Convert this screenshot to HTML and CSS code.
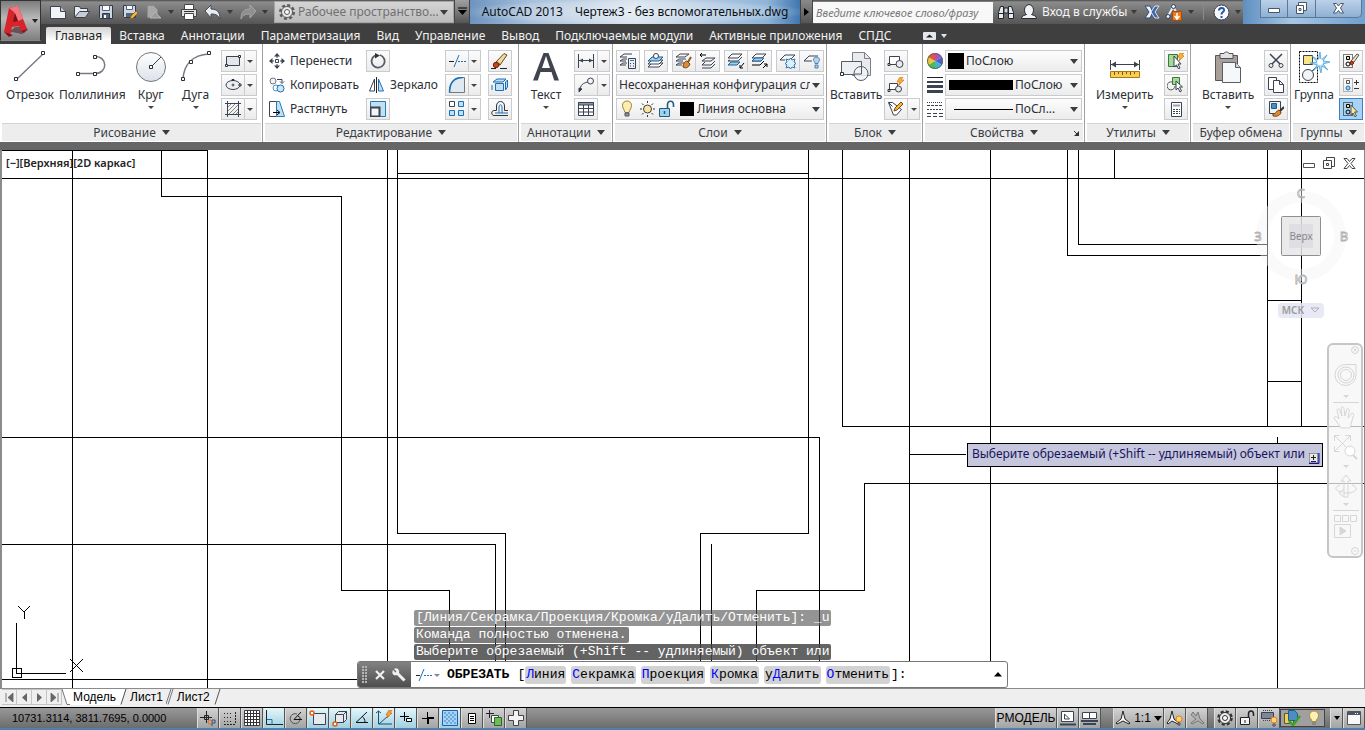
FILE: index.html
```html
<!DOCTYPE html>
<html lang="ru">
<head>
<meta charset="utf-8">
<title>AutoCAD 2013 — Чертеж3</title>
<link rel="stylesheet" href="styles.css">
</head>
<body>
<div class="app">
<header class="top">
  <button class="app-menu" aria-label="Меню приложения">
    <svg width="25" height="32" viewBox="0 0 25 32"><path d="M2 30l6-3 10 2 6-4-3-4-10 1z" fill="#3b0a0e" opacity=".5"/><path d="M0 27L5 3l9-2 9 23-6 2-2-5-7 1-2 7z" fill="#d8232a"/><path d="M5 3l9-2 5 13-5 2-4-9z" fill="#f2777e"/><path d="M9 17l5-1-3-8z" fill="#7a1219"/><path d="M0 27l6 3 2-8-2 7zM17 26l3 2 3-4z" fill="#9c1119"/><path d="M0 27l6 2 3 1-4 2z" fill="#8c0f16"/></svg>
    <i class="tri dark"></i>
  </button>
  <div class="top-main">
    <div class="titlebar">
      <div class="qat">
        <button aria-label="Новый"><svg width="18" height="18" viewBox="0 0 18 18"><path d="M1.500 3.500h10l5 5v7h-15z" fill="#f1f3f6" stroke="#3c424c"/><path d="M11.500 3.500v5h5" fill="#c4cad4" stroke="#3c424c"/></svg></button>
        <button aria-label="Открыть"><svg width="18" height="18" viewBox="0 0 18 18"><path d="M1.500 14.500v-11h5l1 2h7v3" fill="#e9ecf0" stroke="#3c424c"/><path d="M1.500 14.500l5-6h10l-4 6z" fill="#c6cdd8" stroke="#3c424c"/></svg></button>
        <button aria-label="Сохранить"><svg width="18" height="18" viewBox="0 0 18 18"><path d="M2.500 2.500h13v13h-12l-1-1z" fill="#cdd6e2" stroke="#2f3a4a"/><path d="M5.500 2.500h7v5h-7z" fill="#fff" stroke="#53627a"/><path d="M5.500 10.500h7v5h-7z" fill="#566478" stroke="#2f3a4a"/><path d="M7 12h2v3H7z" fill="#fff"/></svg></button>
        <button aria-label="Сохранить как"><svg width="18" height="18" viewBox="0 0 18 18"><path d="M2.500 2.500h12v12h-11l-1-1z" fill="#cdd6e2" stroke="#2f3a4a"/><path d="M5.500 2.500h6v4h-6z" fill="#fff" stroke="#53627a"/><path d="M5 10h7v4H5z" fill="#566478"/><path d="M9 16l1-3 5-5 2 2-5 5z" fill="#f2b63c" stroke="#8a5a1c" stroke-width=".8"/></svg></button>
        <button aria-label="Экспорт"><svg width="18" height="18" viewBox="0 0 18 18"><path d="M2.500 2.500h6l4 4v8h-10z" fill="#a8a8a8" stroke="#8b8b8b"/><path d="M5 15l5-6 6 6z" fill="#9b9b9b" stroke="#b4b4b4"/></svg></button>
        <i class="tri dim"></i>
        <button aria-label="Печать"><svg width="18" height="18" viewBox="0 0 18 18"><path d="M4.500 1.500h9v5h-9z" fill="#fff" stroke="#444"/><path d="M1.500 6.500h15v7h-15z" fill="#dfe2e6" stroke="#444"/><path d="M4.500 10.500h9v6h-9z" fill="#fff" stroke="#444"/><path d="M4 8.500h10" stroke="#333"/></svg></button>
        <button aria-label="Отменить"><svg width="18" height="18" viewBox="0 0 18 18"><path d="M1 8l6-6v4c6 0 9 3 9 10-2-4-4-5-9-5v4z" fill="#e9edf2" stroke="#444b57"/></svg></button>
        <i class="tri dim"></i>
        <button aria-label="Вернуть"><svg width="18" height="18" viewBox="0 0 18 18"><path d="M17 8l-6-6v4c-6 0-9 3-9 10 2-4 4-5 9-5v4z" fill="#8f8f8f" stroke="#a5a5a5"/></svg></button>
        <i class="tri dim"></i>
      </div>
      <div class="workspace">
        <svg width="18" height="18" viewBox="0 0 18 18"><circle cx="9" cy="9" r="6.700" fill="none" stroke="#5a5a5a" stroke-width="2.600" stroke-dasharray="3 2.260"/><circle cx="9" cy="9" r="5.500" fill="#e8e8e8" stroke="#5a5a5a"/><circle cx="9" cy="9" r="2.500" fill="#f8f8f8" stroke="#5a5a5a"/></svg>
        <select aria-label="Рабочее пространство"><option>Рабочее пространство...</option></select><i class="tri"></i>
      </div>
      <button class="qat-more" aria-label="Настройка панели"><svg width="9" height="9" viewBox="0 0 9 9"><path d="M0 1h9" stroke="#000"/><path d="M0 3h9L4.500 8z"/></svg></button>
      <div class="doc-title"><span>AutoCAD 2013</span><span>Чертеж3 - без вспомогательных.dwg</span></div>
      <button class="search-toggle" aria-label="Свернуть поиск"><svg width="5" height="8" viewBox="0 0 5 8"><path d="M0 0l5 4-5 4z"/></svg></button>
      <input class="search" type="text" aria-label="Поиск" placeholder="Введите ключевое слово/фразу">
      <div class="services">
        <button aria-label="Найти"><svg width="18" height="18" viewBox="0 0 18 18"><path d="M1.500 15.500v-6l2-6h3v12zM16.500 15.500v-6l-2-6h-3v12z" fill="#e6e9ee" stroke="#20242b"/><path d="M7 5h4v5H7z" fill="#d0d4da" stroke="#20242b"/><path d="M2 10.500h5M11 10.500h5" stroke="#20242b"/></svg></button>
        <button class="signin"><svg width="18" height="18" viewBox="0 0 18 18"><path d="M1.500 15.500c0-3 3-3 5-4-3-2-3-9 2.500-10 5.500 1 5.500 8 2.500 10 2 1 5 1 5 4z" fill="#f0f2f5" stroke="#252930"/></svg>Вход в службы<i class="tri dim"></i></button>
        <button aria-label="Exchange"><svg width="16" height="14" viewBox="0 0 16 14"><path d="M1 1h5l3 6-3 6H1l4-6z" fill="#f0f4fa" stroke="#28487c"/><path d="M15 1h-4L7 7l4 6h4l-4-6z" fill="#3c67ad" stroke="#dce6f5"/></svg></button>
        <button aria-label="Обновления"><svg width="18" height="18" viewBox="0 0 18 18"><path d="M3 13L8 4M9 5l2 4" stroke="#e9edf3" stroke-width="2"/><circle cx="8.500" cy="3.500" r="2" fill="#eef2f8" stroke="#2b3f60"/><circle cx="3" cy="13.500" r="2" fill="#eef2f8" stroke="#2b3f60"/><path d="M7.500 8.500h9v9h-9z" fill="#ea7a1c" stroke="#a94a0a"/><path d="M12 10v5M9.500 13l2.500 3 2.500-3" stroke="#fff" stroke-width="1.500" fill="none"/></svg></button>
        <i class="tri dim"></i><b class="bar"></b>
        <button aria-label="Справка"><svg width="17" height="17" viewBox="0 0 17 17"><circle cx="8.500" cy="8.500" r="7.500" fill="#f7f9fc" stroke="#39414e"/><path d="M6 6.500c0-3.500 5.500-3.500 5 0-.3 1.700-2.500 1.700-2.500 4M8.500 12v2" stroke="#2456a8" stroke-width="2" fill="none"/></svg></button>
        <i class="tri dim"></i>
      </div>
      <div class="win-controls">
        <button aria-label="Свернуть"><svg width="13" height="13" viewBox="0 0 13 13"><path d="M.500 6.500h11v4h-11z" fill="#fff" stroke="#4b5566"/></svg></button><button aria-label="Развернуть"><svg width="13" height="13" viewBox="0 0 13 13"><path d="M3.500.500h8v8h-8z" fill="#fff" stroke="#4b5566"/><path d="M1.500 3.500h7v8h-7z" fill="#fff" stroke="#4b5566"/><path d="M4 6.500h2v2H4z" stroke="#4b5566" fill="none"/></svg></button><button class="close" aria-label="Закрыть"><svg width="13" height="13" viewBox="0 0 13 13"><path d="M1.500 1.500h3l2 2.500 2-2.500h3l-3 4.500 3 5h-3l-2-2.500-2 2.500h-3l3-5z" fill="#fff" stroke="#4b5566"/></svg></button>
      </div>
    </div>
    <nav class="tabs">
      <button class="tab active">Главная</button><button class="tab">Вставка</button><button class="tab">Аннотации</button><button class="tab">Параметризация</button><button class="tab">Вид</button><button class="tab">Управление</button><button class="tab">Вывод</button><button class="tab">Подключаемые модули</button><button class="tab">Активные приложения</button><button class="tab">СПДС</button>
      <button class="tab-min" aria-label="Свернуть ленту"><svg width="13" height="8" viewBox="0 0 13 8"><rect width="13" height="8" rx="1" fill="#e4e7ec"/><path d="M3 5.500h7l-3.500-3z" fill="#222"/></svg><i class="tri light"></i></button>
    </nav>
  </div>
</header>

<main class="ribbon">
  <section class="panel p-draw">
    <div class="body">
      <button class="tall"><svg class="ln" width="32" height="32" viewBox="0 0 32 32"><path d="M3 28L29 3" stroke="#777c84" stroke-width="1.500"/><path class="nd" d="M.500 26.500h3v3h-3zM27.500.500h3v3h-3z"/></svg><span>Отрезок</span></button>
      <button class="tall"><svg class="ln" width="32" height="32" viewBox="0 0 32 32"><path d="M2 22.500h17c13 0 13-17 0-17" stroke="#777c84" stroke-width="1.500"/><path class="nd" d="M.500 21.500h3v3h-3zM17.500 21.500h3v3h-3zM17.500 4.500h3v3h-3z"/></svg><span>Полилиния</span></button>
      <button class="tall mid"><svg class="ln" width="32" height="32" viewBox="0 0 32 32"><defs><linearGradient id="g" x2="0" y2="1"><stop stop-color="#fff"/><stop offset="1" stop-color="#dde1e8"/></linearGradient></defs><circle cx="16" cy="16" r="14.500" fill="url(#g)" stroke="#70757e"/><path d="M16 16L26 6"/><path class="nd" d="M14.500 14.500h3v3h-3z"/></svg><span>Круг</span><i class="tri sm"></i></button>
      <button class="tall mid"><svg class="ln" width="32" height="32" viewBox="0 0 32 32"><path d="M3 28C4 14 12 4 29 3" stroke="#777c84" stroke-width="1.500"/><path class="nd" d="M1.500 26.500h3v3h-3zM9.500 9.500h3v3h-3zM27.500.500h3v3h-3z"/></svg><span>Дуга</span><i class="tri sm"></i></button>
      <div class="stack">
        <div class="split"><button aria-label="Прямоугольник"><svg class="ln" width="18" height="16" viewBox="0 0 18 16"><path d="M2.500 3.500h13v9h-13z" fill="#e3e6eb"/><path class="nd" d="M1.500 11.500h2v2h-2zM14.500 2.500h2v2h-2z"/></svg></button><button class="arr" aria-label="Ещё"><i class="tri sm"></i></button></div>
        <div class="split"><button aria-label="Эллипс"><svg class="ln" width="18" height="16" viewBox="0 0 18 16"><ellipse cx="9" cy="8" rx="7" ry="4.500" fill="#eceef2"/><path d="M7.500 8h3M9 6.500v3"/><path class="nd" d="M15 7h2v2h-2zM8 2.500h2v1h-2z"/></svg></button><button class="arr" aria-label="Ещё"><i class="tri sm"></i></button></div>
        <div class="split"><button aria-label="Штриховка"><svg class="ln" width="18" height="16" viewBox="0 0 18 16"><path d="M1 2.500h16M1 13.500h16M3.500 0v16M14.500 0v16" /><path d="M4 6l3-3M4 10l7-7M5 13l9-9M9 13l5-5M12 13l2-2" stroke="#888"/></svg></button><button class="arr" aria-label="Ещё"><i class="tri sm"></i></button></div>
      </div>
    </div>
    <button class="cap">Рисование<i class="tri"></i></button>
  </section>

  <section class="panel p-edit">
    <div class="body">
      <div class="stack">
        <button class="row"><svg class="ln" width="16" height="16" viewBox="0 0 16 16"><path d="M8 1v4M8 11v4M1 8h4M11 8h4"/><path d="M8 0L5 3.500h6zM8 16l-3-3.500h6zM0 8l3.500-3v6zM16 8l-3.500-3v6z" fill="#3b4252" stroke="none"/><path d="M6.500 6.500h3v3h-3z" fill="#fff"/></svg>Перенести</button>
        <button class="row"><svg class="ln" width="16" height="16" viewBox="0 0 16 16"><circle cx="4" cy="4" r="3" fill="#f0f2f5" stroke="#70757e"/><path d="M8 2.500h5v3M11 4.500l2 2 2-2"/><circle cx="7" cy="11" r="3" fill="#fff" stroke="#4a90c8"/><circle cx="11.500" cy="11.500" r="3.500" fill="#cfe8f7" stroke="#1d6fb5"/></svg>Копировать</button>
        <button class="row"><svg class="ln" width="16" height="16" viewBox="0 0 16 16"><path d="M.500.500h7v15h-7z" fill="#fff"/><path d="M7.500.500h3l5 15h-8z" fill="#bfe1f3" stroke="#2a7ab8"/><path d="M4 11.500h6M8 9l3 2.500L8 14" stroke="#000"/></svg>Растянуть</button>
      </div>
      <div class="stack left">
        <button class="sq" aria-label="Повернуть"><svg class="ln" width="16" height="16" viewBox="0 0 16 16"><path d="M10 2A6.500 6.500 0 1 1 5 2.500" stroke="#555c68" stroke-width="1.800"/><path d="M5 0l5 2.500-5 3z" fill="#333" stroke="none"/></svg></button>
        <button class="row mirror"><svg class="ln" width="16" height="16" viewBox="0 0 16 16"><path d="M7.500 0v16" stroke="#222"/><path d="M5.500 2v12h-5z" fill="#fff"/><path d="M9.500 2v12h5z" fill="#bfe1f3" stroke="#1d6fb5"/></svg>Зеркало</button>
        <button class="sq" aria-label="Масштаб"><svg class="ln" width="16" height="16" viewBox="0 0 16 16"><path d="M.500.500h15v15H.500z" fill="#bfe1f3" stroke="#2a7ab8"/><path d="M.500 6.500h9v9h-9z" fill="#f4f5f7" stroke-width="2"/></svg></button>
      </div>
      <div class="stack">
        <div class="split"><button aria-label="Обрезать"><svg class="ln" width="18" height="16" viewBox="0 0 18 16"><path d="M1 8.500h5" stroke="#222"/><path d="M6 14L11 2" stroke="#1d6fb5"/><path d="M10 8.500h8" stroke="#1d6fb5" stroke-dasharray="2 1"/></svg></button><button class="arr" aria-label="Ещё"><i class="tri sm"></i></button></div>
        <div class="split"><button aria-label="Сопряжение"><svg class="ln" width="18" height="16" viewBox="0 0 18 16"><path d="M1.500 15.500h15V.500h-3C6 1 1.500 6 1.500 15.500" fill="#dfe9f2" stroke="#777"/><path d="M1.500 15.500C1.500 6 6 .500 15 .500" stroke="#1d6fb5" stroke-width="1.500"/></svg></button><button class="arr" aria-label="Ещё"><i class="tri sm"></i></button></div>
        <div class="split"><button aria-label="Массив"><svg class="ln" width="18" height="16" viewBox="0 0 18 16"><path d="M1.500.500h5v5h-5z" fill="#fff"/><path d="M10.500.500h5v5h-5zM1.500 9.500h5v5h-5zM10.500 9.500h5v5h-5z" fill="#bfe1f3" stroke="#1d6fb5"/></svg></button><button class="arr" aria-label="Ещё"><i class="tri sm"></i></button></div>
      </div>
      <div class="stack">
        <button class="sq" aria-label="Стереть"><svg width="17" height="16" viewBox="0 0 17 16"><path d="M0 15.500h5M9 15.500h7" stroke="#222"/><path d="M5 9l8-8.500 3 1.500-7 10z" fill="#f4d79b" stroke="#5d4a2a"/><path d="M5 9l4 3" stroke="#5d4a2a" stroke-width="2"/><circle cx="5" cy="12" r="2.700" fill="#c8441c" stroke="#7c2409"/></svg></button>
        <button class="sq" aria-label="Расчленить"><svg class="ln" width="18" height="16" viewBox="0 0 18 16"><path d="M4.500 6.500h8v7h-8zM2 5l4-3h9l-3 3zM1 8v5M14.500 5l2-2v7l-2 3z" fill="#bfe1f3" stroke="#1d6fb5"/></svg></button>
        <button class="sq" aria-label="Подобие"><svg class="ln" width="18" height="16" viewBox="0 0 18 16"><path d="M17 14.500H3c-3 0-3-5 0-5h2.500V5c0-6 8-6 8 0v4.500H17" stroke="#333"/><path d="M17 12H4M8 12V6c0-3 3-3 3 0v6" stroke="#1d6fb5"/></svg></button>
      </div>
    </div>
    <button class="cap">Редактирование<i class="tri"></i></button>
  </section>

  <section class="panel p-annot">
    <div class="body">
      <button class="tall"><svg width="32" height="32" viewBox="0 0 32 32"><path d="M3 29.500L13.500 2h5L29 29.500h-4.800L21.500 21h-11l-2.700 8.500zM12 17h8L16 5z" fill="#3f444e" fill-rule="evenodd"/></svg><span>Текст</span><i class="tri sm"></i></button>
      <div class="stack">
        <div class="split"><button aria-label="Размер"><svg class="ln" width="16" height="16" viewBox="0 0 16 16"><path d="M.500 1v14M15.500 1v14M1 7.500h14"/><path d="M1 7.500l4-2v4zM15 7.500l-4-2v4z" fill="#3b4252" stroke="none"/></svg></button><button class="arr" aria-label="Ещё"><i class="tri sm"></i></button></div>
        <div class="split"><button aria-label="Выноска"><svg class="ln" width="16" height="16" viewBox="0 0 16 16"><path d="M2 14c0-6 3-8 8-9"/><path d="M1 15l0-4 3 1z" fill="#333"/><circle cx="12.500" cy="4" r="3" fill="#f4f5f7"/></svg></button><button class="arr" aria-label="Ещё"><i class="tri sm"></i></button></div>
        <button class="sq" aria-label="Таблица"><svg class="ln" width="16" height="16" viewBox="0 0 16 16"><path d="M.500 1.500h15v13h-15zM.500 7.500h15M.500 11h15M5.500 4v11M10.500 4v11" fill="#fff"/><path d="M.500 1.500h15v2.500h-15z" fill="#8a95a5"/></svg></button>
      </div>
    </div>
    <button class="cap">Аннотации<i class="tri"></i></button>
  </section>

  <section class="panel p-layers">
    <div class="body">
      <div class="stack wide">
        <div class="layer-tools">
          <div class="grp"><button aria-label="Свойства слоя"><svg class="ln" width="18" height="16" viewBox="0 0 18 16"><path d="M1 4l4-3h8M1 8l3-2h4M1 12l3-2h4M1 4h7M1 8h6M1 12h6"/><path d="M9.500 5.500h7v10h-7z" fill="#e8edf4"/><path d="M11 7.500h4" stroke="#2a7ab8"/><path d="M11 10.500h1M14 10.500h1M11 13h1M14 13h1"/></svg></button></div>
          <div class="grp"><button aria-label="Сделать текущим"><svg class="ln" width="18" height="16" viewBox="0 0 18 16"><path d="M1 14l4-4h11l-4 4z" fill="#fff"/><path d="M1 11l4-4h11l-4 4z" fill="#fff"/><path d="M1 8l4-4h11l-4 4z" fill="#9fd0ee" stroke="#1d5f95"/><circle cx="9" cy="3" r="2.500" fill="#fff"/></svg></button></div>
          <div class="grp"><button aria-label="Соответствие"><svg class="ln" width="18" height="16" viewBox="0 0 18 16"><path d="M1 4l4-3h9l-4 3zM1 8l3-2h7M1 12l3-2h5M1 8h7M1 12h6"/><path d="M16 4l-3 5" stroke="#8a5a1c" stroke-width="2"/><path d="M8 14c0-3 2-6 4-6l3 3c-1 3-4 5-7 3z" fill="#d98b3a" stroke="#7a4510"/></svg></button><button aria-label="Предыдущий слой"><svg class="ln" width="18" height="16" viewBox="0 0 18 16"><path d="M3 8l4-3h9l-4 3zM3 12l3-3M3 12h9l4-4M3 15h9l4-4"/><path d="M1 2h6M3 0L1 2l2 2" stroke="#000"/></svg></button></div>
          <div class="grp"><button aria-label="Изолировать"><svg class="ln" width="18" height="16" viewBox="0 0 18 16"><path d="M1 5l4-4h10l-4 4zM1 8l2-1M1 8h10l4-4"/><path d="M1 12l3-3h9l-3 3z" fill="#9fd0ee" stroke="#1d5f95"/><path d="M17 10l-4 5M13 12v3h3" stroke="#000"/></svg></button><button aria-label="Отключить изоляцию"><svg class="ln" width="18" height="16" viewBox="0 0 18 16"><path d="M1 5l4-4h10l-4 4zM1 8l3-2M1 8h9"/><path d="M1 8l3-3h9l-3 3z" fill="#9fd0ee" stroke="#1d5f95"/><path d="M1 12h8l4-4M12 15l4-4M13 11h3v3" stroke="#000"/></svg></button></div>
          <div class="grp"><button aria-label="Заморозить"><svg class="ln" width="18" height="16" viewBox="0 0 18 16"><path d="M1 7l5-5h10l-4 4"/><path d="M1 7h5"/><path d="M11.500 5l1.500 2 3-1-1 3 2 1.500-2 1.500 1 3-3-1-1.500 2-1.500-2-3 1 1-3-2-1.500 2-1.500-1-3 3 1z" fill="#dff0fb" stroke="#2a7ab8"/></svg></button><button aria-label="Отключить"><svg class="ln" width="18" height="16" viewBox="0 0 18 16"><path d="M1 8l5-5h9M1 8h8"/><path d="M10.500 6.500c0-3 6-3 6 0 0 2-1.500 2-1.500 4h-3c0-2-1.500-2-1.500-4zM12 12h3v3h-3z" fill="#b5d5ee" stroke="#4a7fb0"/></svg></button></div>
        </div>
        <div class="combo"><select aria-label="Конфигурация слоев"><option>Несохраненная конфигурация сло</option></select><i class="tri"></i></div>
        <div class="combo layer">
          <svg width="58" height="18" viewBox="0 0 58 18"><path d="M3.500 5.500c0-6 9-6 9 0 0 3-2 4-2.500 7h-4c-.500-3-2.500-4-2.500-7z" fill="#fbeeb0" stroke="#a08030"/><path d="M6 13h4v3H6z" fill="#8a93a5" stroke="#4a5568"/><circle cx="28.500" cy="9" r="4" fill="#f7e6a5" stroke="#3f3f3f"/><path d="M28.500 1v2M28.500 15v2M21 9h2M34 9h2M23 3.500l1.500 1.500M34 3.500L32.500 5M23 14.500l1.500-1.500M34 14.500L32.500 13" stroke="#333"/><path d="M48.500 8V5c0-5 6-5 6 0v2" fill="none" stroke="#235d86" stroke-width="1.600"/><path d="M40.500 8.500h10v8h-10z" fill="#9fd4ee" stroke="#235d86"/><path d="M45.500 11v3" stroke="#235d86" stroke-width="1.500"/></svg>
          <b class="swatch"></b><select aria-label="Слой"><option>Линия основна</option></select><i class="tri"></i></div>
      </div>
    </div>
    <button class="cap">Слои<i class="tri"></i></button>
  </section>

  <section class="panel p-block">
    <div class="body">
      <button class="tall"><svg class="ln" width="32" height="32" viewBox="0 0 32 32"><path d="M12.500 1.500h12l6 6v17h-18z" fill="#e9ebef" stroke="#7b8089"/><path d="M24.500 1.500v6h6" stroke="#7b8089"/><path d="M1.500 10.500h20v13h-20z" fill="#eef0f3" stroke="#545a66"/><circle cx="21" cy="22.500" r="7" fill="#f2f3f6" fill-opacity=".85" stroke="#545a66"/><path class="nd" d="M.500 21.500h3v3h-3z"/><path d="M21.500 16v7h-7" stroke="#545a66"/></svg><span>Вставить</span></button>
      <div class="stack">
        <button class="sq" aria-label="Создать блок"><svg class="ln" width="18" height="16" viewBox="0 0 18 16"><path d="M2.500 3.500h10v8h-10z" fill="#fff"/><circle cx="12.500" cy="11" r="3.500" fill="#e8eaee"/><path class="nd" d="M1 10.500h2v2H1z"/></svg></button>
        <button class="sq" aria-label="Редактор блоков"><svg class="ln" width="18" height="16" viewBox="0 0 18 16"><path d="M2.500 6.500h8v6h-8z" fill="#fff"/><circle cx="11.500" cy="12" r="3" fill="#e8eaee"/><path class="nd" d="M1 12.500h2v2H1z"/><path d="M13 0l-3 5h3l-2 4 6-6h-3l2-3z" fill="#f7b13c" stroke="#d9780f" stroke-width=".7"/></svg></button>
        <div class="split"><button aria-label="Атрибуты"><svg class="ln" width="18" height="16" viewBox="0 0 18 16"><path d="M1.500 1.500h4l9 7-5 5.500h-3zM1.500 1.500l4 4" fill="#fff"/><path d="M7 10l1-3 6-6 2 2-6 6z" fill="#f2b63c" stroke="#7a4a10"/></svg></button><button class="arr" aria-label="Ещё"><i class="tri sm"></i></button></div>
      </div>
    </div>
    <button class="cap">Блок<i class="tri"></i></button>
  </section>

  <section class="panel p-props">
    <div class="body">
      <div class="prop"><svg width="16" height="16" viewBox="0 0 16 16"><path d="M8 8V0a8 8 0 0 1 7 4z" fill="#b04fc0"/><path d="M8 8l7-4a8 8 0 0 1 0 8z" fill="#4a62c8"/><path d="M8 8l7 4a8 8 0 0 1-7 4z" fill="#3fb3d0"/><path d="M8 8v8a8 8 0 0 1-7-4z" fill="#55b848"/><path d="M8 8l-7 4a8 8 0 0 1 0-8z" fill="#e8c936"/><path d="M8 8L1 4a8 8 0 0 1 7-4z" fill="#e05a3a"/><circle cx="8" cy="8" r="7.500" fill="none" stroke="#666"/></svg><div class="combo"><b class="swatch"></b><select aria-label="Цвет"><option>ПоСлою</option></select><i class="tri"></i></div></div>
      <div class="prop"><svg width="16" height="16" viewBox="0 0 16 16"><path d="M0 .500h16" stroke="#222"/><path d="M0 5h16" stroke="#3b4252" stroke-width="2"/><path d="M0 9.500h16" stroke="#3b4252" stroke-width="3"/><path d="M0 14.500h16" stroke="#3b4252" stroke-width="3"/></svg><div class="combo"><b class="swatch weight"></b><select aria-label="Вес линии"><option>ПоСлою</option></select><i class="tri"></i></div></div>
      <div class="prop"><svg width="16" height="16" viewBox="0 0 16 16" stroke="#3b4252"><path d="M0 1.500h16"  stroke-dasharray="1 1"/><path d="M0 4.500h16" stroke-dasharray="3 1"/><path d="M0 8.500h16" stroke-dasharray="2 1"/><path d="M0 12.500h16" stroke-dasharray="4 2"/><path d="M0 15.500h16" stroke-dasharray="4 2"/></svg><div class="combo"><b class="swatch thin"></b><select aria-label="Тип линий"><option>ПоСл...</option></select><i class="tri"></i></div></div>
    </div>
    <div class="cap">Свойства<i class="tri"></i><svg class="launch" width="6" height="6" viewBox="0 0 6 6"><path d="M1 1l4 4" stroke="#333"/><path d="M6 1v5H1z" fill="#333"/></svg></div>
  </section>

  <section class="panel p-util">
    <div class="body">
      <button class="tall"><svg class="ln" width="32" height="32" viewBox="0 0 32 32"><path d="M1.500 9v10M30.500 9v10M2 13.500h28"/><path d="M2 13.500l5-3v6zM30 13.500l-5-3v6z" fill="#3b4252" stroke="none"/><path d="M1.500 20.500h29v6h-29z" fill="#f6cf52" stroke="#a87812"/><path d="M5.500 21v3M9.500 21v2M13.500 21v3M17.500 21v2M21.500 21v3M25.500 21v2" stroke="#7a5508"/></svg><span>Измерить</span><i class="tri sm"></i></button>
      <div class="stack">
        <button class="sq" aria-label="Быстрый выбор"><svg class="ln" width="18" height="16" viewBox="0 0 18 16"><path d="M1.500 1.500h9v12h-9z" fill="#a5d99b" stroke="#3a7a32"/><path d="M7 3v11l2.500-2 2 4 1.500-1-2-4h3z" fill="#fff"/><path d="M13 0l-2 4 2 1-1 3 5-5-2-1 2-2z" fill="#f7b13c" stroke="#d9780f" stroke-width=".7"/></svg></button>
        <button class="sq" aria-label="Выбрать подобные"><svg class="ln" width="18" height="16" viewBox="0 0 18 16"><path d="M5.500.500h7v7h-7z" fill="#a5d99b" stroke="#3a7a32"/><path d="M8 9a4 4 0 1 1-3-4" stroke="#555"/><path d="M9 4v9l2-2 2 4 1.500-1-2-4h3z" fill="#fff"/></svg></button>
        <button class="sq" aria-label="Калькулятор"><svg class="ln" width="16" height="16" viewBox="0 0 16 16"><path d="M3.500 1.500h10v14h-10z" fill="#fff"/><path d="M5 3.500h7v2H5z" fill="#9aa2ae" stroke="none"/><path d="M5 8.500h7M5 10.500h7M5 12.500h7" stroke-dasharray="2 1"/></svg></button>
      </div>
    </div>
    <button class="cap">Утилиты<i class="tri"></i></button>
  </section>

  <section class="panel p-clip">
    <div class="body">
      <button class="tall"><svg class="ln" width="32" height="32" viewBox="0 0 32 32"><path d="M3.500 4.500h22v25h-22z" fill="#a89f98" stroke="#5a5450"/><path d="M8 2.500h4c0-2 5-2 5 0h4v5H8z" fill="#dfe1e4" stroke="#4d5058"/><path d="M10.500 11.500h13l5 5v15h-18z" fill="#f6f7f9" stroke="#565c68"/><path d="M23.500 11.500v5h5" fill="#cfd3da" stroke="#565c68"/></svg><span>Вставить</span><i class="tri sm"></i></button>
      <div class="stack">
        <button class="sq" aria-label="Вырезать"><svg class="ln" width="16" height="16" viewBox="0 0 16 16"><path d="M2 1l10 10M14 1L4 11" stroke-width="1.500"/><circle cx="3" cy="12.500" r="2"/><circle cx="13" cy="12.500" r="2"/></svg></button>
        <button class="sq" aria-label="Копировать в буфер"><svg class="ln" width="16" height="16" viewBox="0 0 16 16"><path d="M.500.500h8v12h-8z" fill="#fff"/><path d="M5.500 3.500h6l4 4v8h-10zM11.500 3.500v4h4" fill="#fff"/></svg></button>
        <button class="sq" aria-label="Копировать свойства"><svg class="ln" width="16" height="16" viewBox="0 0 16 16"><path d="M1.500.500h11v12h-11z" fill="#eef1f5"/><path d="M3.500 2.500h5v5h-5z" fill="#4b8ec4" stroke="#235d86"/><path d="M16 6l-4 4" stroke="#333" stroke-width="2"/><path d="M5 13c3 0 4-4 6-4l2 2c0 3-4 5-8 4z" fill="#d98b3a" stroke="#7a4510"/></svg></button>
      </div>
    </div>
    <div class="cap">Буфер обмена</div>
  </section>

  <section class="panel p-group">
    <div class="body">
      <button class="tall"><svg class="ln" width="32" height="32" viewBox="0 0 32 32"><path d="M1.500.500h18v31h-18z" stroke="#000" stroke-dasharray="2 1"/><path d="M5.500 4.500h9v9h-9z" fill="#f8e58a" stroke="#3b4252"/><circle cx="10" cy="24" r="5.500" fill="#f3f4f6" stroke="#3b4252"/><path d="M14 20l6-6"/><path d="M22 1l1 8 6-5-4 6 7 1-7 2 5 6-6-4-1 7-2-7-6 5 4-6-7-2 7-1-5-6 6 4z" fill="#a9dcf8" stroke="#3d94cf" stroke-width=".7"/><circle cx="22" cy="11" r="3" fill="#fff" stroke="none"/></svg><span>Группа</span></button>
      <div class="stack">
        <button class="sq" aria-label="Разгруппировать"><svg class="ln" width="18" height="16" viewBox="0 0 18 16"><path d="M1.500 1.500h9v13h-9z" stroke-dasharray="1 1" stroke="#000"/><path d="M4.500 3.500h3v3h-3z" fill="#f8e58a" stroke="#000"/><circle cx="6" cy="11" r="2" stroke="#000"/><path d="M9 8l6-7 2 1-5 7z" fill="#f4e3c0" stroke="#555"/><path d="M9 8l3 2-2 2-2-1z" fill="#c8441c" stroke="#7c2409"/></svg></button>
        <button class="sq" aria-label="Изменить группу"><svg class="ln" width="18" height="16" viewBox="0 0 18 16"><path d="M1.500 1.500h9v13h-9z" stroke-dasharray="1 1" stroke="#777"/><path d="M4.500 3.500h3v3h-3z" stroke="#555"/><circle cx="6" cy="11" r="2" fill="#9fd0ee" stroke="#1d6fb5"/><path d="M12 5.500h5M14.500 3v5M12 11.500h5" stroke="#333"/></svg></button>
        <button class="sq on" aria-label="Выбор группы"><svg class="ln" width="18" height="16" viewBox="0 0 18 16"><path d="M1.500 1.500h9v13h-9z" stroke-dasharray="1 1" stroke="#000"/><path d="M4.500 3.500h3v3h-3z" fill="#f8e58a" stroke="#000"/><circle cx="6" cy="11" r="2" stroke="#000"/><path d="M9 4v10l2-2 2 4 1.500-1-2-4h3z" fill="#f8e9a0" stroke="#555"/></svg></button>
      </div>
    </div>
    <button class="cap">Группы<i class="tri"></i></button>
  </section>
</main>

<section class="canvas">
  <svg class="drawing" aria-hidden="true"><g transform="translate(-2 -150)" fill="none" stroke="#000" shape-rendering="crispEdges">
    <path d="M2 150.500H207.500V688M2 178.500H1365M72.500 150V688M161.500 150V196.500H341.500V590.500H449.500V662M387.500 150V662M397.500 150V533.500H505.500V662M397.500 173.500H808.500M808.500 150V533.500H700.500V662M2 544.500H495.500V662M711.500 544V662M2 437.500H819.500V662M2 679.500H358"/>
    <path d="M756.500 662V590.500H864.500V483.500H1365M842.500 150V426.500H1365M909.500 150V688M990.500 150V688M909.500 454.500H966M1067.500 150V255.500H1267.500M1078.500 150V244.500H1267.500M1114.500 150V178.500M1267.500 150V426.500M1301.500 150V426.500M1267.500 300.500H1301.500M1267.500 381.500H1301.500M1277.500 437V688"/>
    <path d="M16.500 623V673.500H66M12.500 668.500h9v9h-9z"/>
    <path d="M18 606l6 6 6-6M24.500 612v7M70 659l13 13M83 659l-13 13"/>
  </g></svg>
  <div class="view-label"><button>[−]</button><button>[Верхняя]</button><button>[2D каркас]</button></div>
  <div class="doc-controls">
    <button aria-label="Свернуть чертеж"><svg width="13" height="13" viewBox="0 0 13 13"><path d="M.500 6.500h11v4h-11z" fill="#fff" stroke="#555"/></svg></button>
    <button aria-label="Развернуть чертеж"><svg width="13" height="13" viewBox="0 0 13 13"><path d="M3.500.500h8v9h-8z" fill="#fff" stroke="#444"/><path d="M.500 3.500h8v8h-8z" fill="#fff" stroke="#444"/><path d="M3.500 6.500h2v2h-2z" stroke="#444" fill="none"/></svg></button>
    <button aria-label="Закрыть чертеж"><svg width="13" height="13" viewBox="0 0 13 13"><path d="M1 1.500h3l2.500 3 2.500-3h3l-4 5 4 5H9l-2.500-3-2.500 3H1l4-5z" fill="#fff" stroke="#444"/></svg></button>
  </div>
  <div class="viewcube">
    <svg width="110" height="142" viewBox="0 0 110 142" text-anchor="middle">
      <circle cx="55" cy="55" r="39" fill="none" stroke="#f4f4f4" stroke-opacity=".45" stroke-width="12"/>
      <rect x="35.500" y="35.500" width="39" height="39" rx="1" fill="#e6e6e6" fill-opacity=".85" stroke="#8f8f8f"/>
      <rect x="43" y="43" width="24" height="24" fill="#d8d9e0" opacity=".7"/>
      <text x="55" y="59" font-size="10" fill="#888">Верх</text>
      <g font-size="13" fill="#fff" stroke="#b0b0b0" stroke-width=".8"><text x="55" y="17">С</text><text x="12" y="60">З</text><text x="98" y="60">В</text><text x="55" y="103">Ю</text></g>
      <rect x="32" y="122" width="46" height="15" rx="4" fill="#e4e5f2" fill-opacity=".85"/>
      <text x="47" y="133" font-size="10" font-weight="600" fill="#999">МСК</text><path d="M65 127h8l-4 4z" fill="none" stroke="#b0b0b8"/>
    </svg>
  </div>
  <div class="navbar">
    <svg width="32" height="211" viewBox="0 0 32 211" fill="none" stroke="#d6d6d6">
      <circle cx="26" cy="5" r="3.500"/><path d="M24.500 3.500l3 3M27.500 3.500l-3 3"/>
      <path d="M17 19.500h10v10a10.500 10.500 0 1 1-10-10z"/><circle cx="17" cy="30" r="5.500"/><circle cx="17" cy="30" r="8"/>
      <path d="M14 50h6l-3 3z" fill="#d6d6d6" stroke="none"/><path d="M4 57.500h26M4 165.500h26"/>
      <path d="M12 83l-7-10c0-2 3-2 5 1l-2-9c1-2 3-1 3 1l2 5-1-8c1-2 3-1 3 1l1 7 2-7c2-1 3 1 2 3l-1 6 4-5c2 0 2 2 1 4l-3 11z" fill="#f8f8f8"/>
      <path d="M6 91l15 15M21 91L6 106M5.500 96v-5.500h5M16 90.500h5.500V96M5.500 101v5.500h5"/><circle cx="21" cy="106" r="5" fill="#fff"/><path d="M24 110l4 4" stroke-width="2"/>
      <path d="M14 120h6l-3 3zM14 158h6l-3 3z" fill="#d6d6d6" stroke="none"/>
      <path d="M15 152v-16h-3l5-6 5 6h-3v16zM11 140c-6 2-6 6 3 7M23 140c6 2 6 6-2 8h-6M15 144l-5 4 5 4"/>
      <path d="M5.500 170.500h6v6h-6zM13.500 170.500h6v6h-6zM21.500 170.500h6v6h-6zM5.500 179.500h16v13h-16z"/><path d="M11 182v8l6-4z" fill="#d6d6d6"/>
      <circle cx="26" cy="206" r="3.500"/><path d="M24.500 206h3"/>
    </svg>
  </div>
  <div class="tooltip"><span>Выберите обрезаемый (+Shift -- удлиняемый) объект или</span><svg width="11" height="11" viewBox="0 0 11 11"><path d="M0 0h9v10H0z" fill="#e8e8e8" stroke="#444"/><path d="M10 0v10.500H0" stroke="#11a" fill="none"/><path d="M4.500 2v5M2 4.500h5M2 8.500h5" stroke="#222"/></svg></div>
  <div class="console">
    <div class="history"><p>[Линия/Секрамка/Проекция/Кромка/уДалить/Отменить]: _u</p><p>Команда полностью отменена.</p><p>Выберите обрезаемый (+Shift -- удлиняемый) объект или</p></div>
    <div class="cmd">
      <div class="cmd-grip">
        <svg width="6" height="18" viewBox="0 0 6 18"><path d="M1 0v18M4 0v18" stroke="#b5b5b5" stroke-width="2" stroke-dasharray="2 1"/></svg>
        <button aria-label="Закрыть"><svg width="10" height="10" viewBox="0 0 10 10"><path d="M1 1l8 8M9 1L1 9" stroke="#f0f0f0" stroke-width="2.200"/></svg></button>
        <button aria-label="Настройка"><svg width="14" height="14" viewBox="0 0 14 14"><path d="M5 5l7.500 7.500" stroke="#f0f0f0" stroke-width="3"/><path d="M2 1l2.500 2.500-1 1L1 2c-2 4 1 6 4 5l2-2c1-3-2-6-5-4z" fill="#f0f0f0"/></svg></button>
      </div>
      <div class="cmd-line">
        <svg width="26" height="14" viewBox="0 0 26 14"><path d="M1 7.500h4" stroke="#222"/><path d="M4 13L9 1" stroke="#1d6fb5"/><path d="M9 7.500h8" stroke="#1d6fb5" stroke-dasharray="2 1"/><path d="M19 6h6l-3 3z" fill="#888"/></svg>
        <b>ОБРЕЗАТЬ</b><span>[</span><button><em>Л</em>иния</button><button><em>С</em>екрамка</button><button><em>П</em>роекция</button><button><em>К</em>ромка</button><button>у<em>Д</em>алить</button><button class="last"><em>О</em>тменить</button><span>]:</span>
        <button class="up" aria-label="История"><svg width="8" height="5" viewBox="0 0 8 5"><path d="M0 4.500L4 0l4 4.500z"/></svg></button>
      </div>
    </div>
  </div>
</section>

<nav class="sheets">
  <button class="nav" aria-label="Первый"><svg width="9" height="9" viewBox="0 0 9 9"><path d="M1 0v9M8 0v9L3 4.500z" stroke="#666" fill="#666" stroke-width=".8"/></svg></button><button class="nav" aria-label="Назад"><svg width="9" height="9" viewBox="0 0 9 9"><path d="M7 0v9L2 4.500z" fill="#666"/></svg></button><button class="nav" aria-label="Вперед"><svg width="9" height="9" viewBox="0 0 9 9"><path d="M2 0v9l5-4.500z" fill="#666"/></svg></button><button class="nav" aria-label="Последний"><svg width="9" height="9" viewBox="0 0 9 9"><path d="M8 0v9M1 0v9l5-4.500z" stroke="#666" fill="#666" stroke-width=".8"/></svg></button>
  <svg width="8" height="16" viewBox="0 0 8 16"><path d="M0 0h8v16H5z" fill="#fff"/><path d="M0 0l5 15.500h3" stroke="#777" fill="none"/></svg>
  <button class="sheet current">Модель</button>
  <svg width="8" height="16" viewBox="0 0 8 16"><path d="M0 0h6L1 16H0z" fill="#fff"/><path d="M7 0L2 15.500" stroke="#555"/></svg>
  <button class="sheet">Лист1</button>
  <svg width="8" height="16" viewBox="0 0 8 16"><path d="M7 0L2 15.500M5 0L0 15" stroke="#777"/></svg>
  <button class="sheet">Лист2</button>
  <svg width="8" height="16" viewBox="0 0 8 16"><path d="M7 0L2 15.500" stroke="#555"/></svg>
</nav>

<footer class="status">
  <div class="coords">10731.3114, 3811.7695, 0.0000</div>
  <div class="toggles">
    <button aria-label="Зависимости"><svg class="ln" width="18" height="18" viewBox="0 0 18 18"><path d="M7.500 2v12M1 8.500h12M5.500 6.500h4v4h-4z" stroke="#222"/><path d="M13 17v-6h3v3h-3" stroke="#1d4f95"/><circle cx="11" cy="13" r="2" stroke="#e07020"/></svg></button>
    <button aria-label="Шаг"><svg class="ln" width="16" height="16" viewBox="0 0 16 16"><path d="M2 3.500h9M2 7.500h9M2 11.500h9" stroke-dasharray="1 2" stroke="#222"/><path d="M2 14.500h11M13.500 2v12" stroke="#222" stroke-dasharray="2 1"/></svg></button>
    <button aria-label="Сетка"><svg class="ln" width="16" height="16" viewBox="0 0 16 16"><path d="M.500.500h15v15h-15z" fill="#fff"/><path d="M3.500 0v16M6.500 0v16M9.500 0v16M12.500 0v16M0 3.500h16M0 6.500h16M0 9.500h16M0 12.500h16" stroke="#333"/></svg></button>
    <button class="on" aria-label="Орто"><svg class="ln" width="18" height="16" viewBox="0 0 18 16"><path d="M1.500 0v14.500H18" stroke="#222"/><path d="M2 9.500h5v5" stroke="#1d6fb5"/></svg></button>
    <button aria-label="Полярное"><svg class="ln" width="16" height="16" viewBox="0 0 16 16"><path d="M9 4a5 5 0 1 0 3 6" stroke="#555"/><path d="M6 9.500L13 2M6 9.500h8M10 6c2 1 2 2 2 3" stroke="#111"/></svg></button>
    <button class="on" aria-label="Привязка"><svg class="ln" width="18" height="16" viewBox="0 0 18 16"><path d="M4.500 3.500h12v11h-12z" fill="#e6e9ee"/><circle cx="3" cy="3" r="2" fill="#fff" stroke="#e06010" stroke-width="1.500"/></svg></button>
    <button class="on" aria-label="3D привязка"><svg class="ln" width="18" height="18" viewBox="0 0 18 18"><path d="M4.500 5.500l3-3h8v8l-3 3h-8z" fill="#e6e9ee"/><path d="M4.500 5.500h8v8M12.500 5.500l3-3"/><circle cx="4" cy="15" r="2" fill="#fff" stroke="#e06010" stroke-width="1.500"/></svg></button>
    <button class="on" aria-label="Отслеживание"><svg class="ln" width="16" height="16" viewBox="0 0 16 16"><path d="M13 2L2 12.500h12M8 6c2 2 3 4 3 6" stroke="#111"/></svg></button>
    <button class="on" aria-label="ДПСК"><svg class="ln" width="18" height="16" viewBox="0 0 18 16"><path d="M3.500 1v13H17M4 14l9-8M1 3l2.500-2L6 3" stroke="#1d4f75"/><path d="M14 0l-3 5h2l-1 3 5-5h-2l2-3z" fill="#f7a13c" stroke="#d9680f" stroke-width=".7"/></svg></button>
    <button class="on" aria-label="Динамический ввод"><svg class="ln" width="16" height="16" viewBox="0 0 16 16"><path d="M6.500 2v9M2 6.500h9" stroke="#000"/><path d="M8.500 8.500h5v3h-5z" fill="#fff" stroke="#000"/></svg></button>
    <button aria-label="Вес линий"><svg width="16" height="16" viewBox="0 0 16 16"><path d="M2 8.500h6M7.500 2v6" stroke="#000"/><path d="M8 7v7M8 8h6" stroke="#000" stroke-width="2"/></svg></button>
    <button class="on" aria-label="Прозрачность"><svg width="16" height="16" viewBox="0 0 16 16"><path d="M.500.500h15v15h-15z" fill="#a8d4f2" stroke="#1d5fb5"/><path d="M2 3h12M2 7h12M2 11h12" stroke="#6fa9dc" stroke-width="2" stroke-dasharray="2 2"/><path d="M4 5h10M4 9h10M4 13h10" stroke="#6fa9dc" stroke-width="2" stroke-dasharray="2 2"/></svg></button>
    <button aria-label="Быстрые свойства"><svg class="ln" width="16" height="16" viewBox="0 0 16 16"><path d="M4.500 3.500h7v10h-7z" fill="#fff" stroke="#000"/><path d="M6 6.500h4M6 8.500h4M6 10.500h4" stroke="#000"/></svg></button>
    <button aria-label="Циклический выбор"><svg class="ln" width="18" height="18" viewBox="0 0 18 18"><path d="M4.500 1v8M1 4.500h8" stroke="#222"/><path d="M6.500 6.500h7v7h-7z" fill="#fff"/><path d="M9.500 8.500h7v8h-7z" fill="#6dbb5c" stroke="#2a6a22"/></svg></button>
    <button aria-label="Монитор аннотаций"><svg width="16" height="16" viewBox="0 0 16 16"><path d="M5.500.500h5v5h5v5h-5v5h-5v-5h-5v-5h5z" fill="#f2f3f5" stroke="#444"/></svg></button>
  </div>
  <div class="status-right">
    <button class="model">РМОДЕЛЬ</button>
    <button aria-label="Лист"><svg class="ln" width="16" height="16" viewBox="0 0 16 16"><path d="M1.500 1.500h12v10h-12z" fill="#fff"/><path d="M4.500 9V4l5 5z"/><path d="M0 14.500h16" stroke-width="2"/></svg></button>
    <button aria-label="Виды"><svg class="ln" width="18" height="16" viewBox="0 0 18 16"><path d="M1.500 2.500h7v6h-7zM8.500 2.500h7v6h-7z" fill="#fff"/><path d="M0 11h17M2 14h13" stroke-width="2"/></svg></button>
    <b class="gap"></b>
    <button class="scale"><svg class="ln" width="16" height="16" viewBox="0 0 16 16"><path d="M8 1l2 8 5 4-1 1-6-3-6 3-1-1 5-4z" fill="#f4f5f7" stroke="#222"/></svg>1:1<i class="tri dark"></i></button>
    <button aria-label="Видимость аннотаций"><svg class="ln" width="18" height="16" viewBox="0 0 18 16"><path d="M6 1l2 8 5 4-1 1-6-3-4 3-1-1 3-4z" fill="#f4f5f7" stroke="#222"/><circle cx="13" cy="9" r="3" fill="#ffd56b" stroke="#e0801a"/><path d="M12 13h2v2h-2z" fill="#eee"/></svg></button>
    <button aria-label="Автомасштаб"><svg class="ln" width="16" height="16" viewBox="0 0 16 16"><path d="M9 2l2 7 4 4-1 1-5-3-6 3-1-1 5-4-5-4 2-3 3 4z" fill="#b0b0b0" stroke="#777"/></svg></button>
    <b class="gap narrow"></b>
    <button aria-label="Параметры"><svg width="16" height="16" viewBox="0 0 16 16"><circle cx="8" cy="8" r="6.500" fill="none" stroke="#333" stroke-width="2.500" stroke-dasharray="3 2.100"/><circle cx="8" cy="8" r="5.500" fill="#eee" stroke="#333"/><circle cx="8" cy="8" r="2.500" fill="#fff" stroke="#333"/></svg></button>
    <button aria-label="Блокировка"><svg class="ln" width="18" height="16" viewBox="0 0 18 16"><path d="M10.500 7V4c0-4 5-4 5 0v2" stroke="#222" stroke-width="1.500"/><path d="M2.500 7.500h9v7h-9z" fill="#f4f5f7" stroke="#222"/><path d="M7 10v3" stroke="#222"/></svg></button>
    <button aria-label="Ускорение"><svg class="ln" width="18" height="18" viewBox="0 0 18 18"><path d="M1.500 3.500h12v6h-12z" fill="#7d8798"/><path d="M3 1.500h10M3 11.500h8" stroke-dasharray="1 1"/><circle cx="14" cy="11" r="3" fill="#ffd56b" stroke="#e0801a"/><path d="M13 15h2v2h-2z" fill="#eee"/></svg></button>
    <div class="tray"><svg width="18" height="16" viewBox="0 0 18 16"><path d="M1.500 3.500h9v10h-9z" fill="#f2cf45" stroke="#555"/><path d="M5.500.500h6l3 3v7h-9z" fill="#4b8ec4" stroke="#235d86"/><path d="M6 11l4 4 7-9" fill="none" stroke="#3aa12a" stroke-width="2.500"/></svg><svg width="16" height="16" viewBox="0 0 16 16"><path d="M3.500 5.500c0-6 9-6 9 0 0 3-2 3-2.500 6h-4c-.500-3-2.500-3-2.500-6z" fill="#fdf0b5" stroke="#b08a30"/><path d="M6 12h4v3H6z" fill="#888"/></svg></div>
    <button class="menu" aria-label="Меню"><i class="tri dark"></i></button>
    <button aria-label="Очистить экран"><svg width="16" height="16" viewBox="0 0 16 16"><path d="M1.500 1.500h13v13h-13z" fill="#f7f8fa" stroke="#555"/><path d="M2 2h12v3H2z" fill="#4a5568"/><path d="M9 3.500h4" stroke="#fff" stroke-dasharray="1 1"/></svg></button>
  </div>
</footer>
</div>
</body>
</html>
```
FILE: styles.css
```css
* { box-sizing: border-box; }
body { margin: 0; font: 12px/16px "Noto Sans", "Open Sans", sans-serif; color: #2c2f36; }
button, select, input { font: inherit; color: inherit; border: 0; padding: 0; margin: 0; background: none; border-radius: 0; }
select { appearance: none; min-width: 0; flex: 1; height: 100%; overflow: hidden; text-overflow: clip; }
svg { display: block; flex: none; }
.app { height: 100vh; display: flex; flex-direction: column; overflow: hidden; background: #fff; border-bottom: 2px solid #4f7fae; }

.tri { flex: none; width: 0; height: 0; border: 4px solid transparent; border-top: 5px solid #3a3d42; border-bottom: 0; }
.tri.sm { border-width: 3px 3px 0; border-top-color: #444; }
.tri.dim { border-width: 4px 3px 0; border-top-color: #383838; }
.tri.dark { border-top-color: #000; }
.tri.light { border-width: 4px 3px 0; border-top-color: #dfe3ea; }
.ln { fill: none; stroke: #3b4252; }
.nd { fill: #fff; stroke: #2b3038; }

/* title bar and tabs */
.top { display: flex; background: #3f3f3f; }
.app-menu { width: 41px; height: 41px; display: flex; align-items: center; gap: 3px; padding-left: 3px; border: 1px solid #333; border-bottom-color: #888; background: linear-gradient(#7c7c7c, #b9b9b9 45%, #7f7f7f); }
.app-menu .tri { border-width: 4px 3px 0; border-top-color: #222; }
.top-main { flex: 1; min-width: 0; }
.titlebar { height: 24px; display: flex; align-items: stretch; background: linear-gradient(#4b4b4b, #8c8c8c 2px, #555); }
.qat { display: flex; align-items: center; gap: 6px; padding: 0 6px 0 8px; }
.qat .tri { margin-left: -1px; }
.workspace { width: 180px; margin: 1px 0; display: flex; align-items: center; padding: 0 5px 0 3px; gap: 2px; background: linear-gradient(#d4d4d4, #bcbcbc); color: #707070; border: 1px solid #a5a5a5; }
.qat-more { width: 16px; display: grid; place-items: center; background: linear-gradient(#a0a0a0, #555); border: 1px solid #444; border-top: 0; }
.doc-title { flex: 1; min-width: 0; display: flex; justify-content: center; align-items: center; gap: 12px; white-space: nowrap; overflow: hidden; color: #0c0f14; background: radial-gradient(ellipse at center, rgba(255,255,255,.45), rgba(255,255,255,.2) 60%, transparent 75%), linear-gradient(90deg, #6d93bf, #a5bfdb 18%, #d5e0ec 50%, #8fb4d8 90%, #4177ae); }
.search-toggle { width: 13px; display: grid; place-items: center; background: linear-gradient(#8a8a8a, #555); border: 1px solid #444; border-top: 0; }
.search { width: 180px; margin: 2px 0 1px; padding: 0 3px; background: #f8f8f8; font-style: italic; font-size: 11px; }
.search::placeholder { color: #777; opacity: 1; }
.services { width: 250px; display: flex; align-items: center; gap: 5px; padding-left: 4px; color: #f5f5f5; white-space: nowrap; }
.signin { display: flex; align-items: center; gap: 4px; margin-right: 2px; }
.bar { width: 1px; height: 16px; background: #8a8a8a; margin: 0 4px; }
.win-controls { width: 122px; flex: none; display: flex; padding: 0 3px 6px 17px; background: linear-gradient(90deg, #5f8fc0, #a8c6e4 40%, #6fa0cf); }
.win-controls button { flex: 27; display: grid; place-items: center; border: 1px solid #5c7897; border-top: 0; background: linear-gradient(#bcd1e8, #8eb0d3); }
.win-controls button + button { border-left: 0; }
.win-controls .close { flex: 46; border-radius: 0 0 5px 0; }
.tabs { height: 20px; display: flex; align-items: flex-end; padding-left: 5px; color: #f2f2f2; }
.tab { height: 17px; padding: 0 8px; white-space: nowrap; }
.tab.active { padding: 0 9px; color: #222; background: linear-gradient(#d2d2d2, #fff 80%); border-radius: 2px 2px 0 0; }
.tab-min { height: 17px; display: flex; align-items: center; gap: 5px; margin-left: 24px; }

/* ribbon */
.ribbon { display: flex; height: 106px; background: #fff; border-bottom: 8px solid #666; flex: none; }
.panel { display: flex; flex-direction: column; min-width: 0; flex: 1 1 100px; border-right: 1px solid #a0a0a0; padding-bottom: 1px; }
.panel:last-child { border-right: 0; }
.body { flex: 1; display: flex; justify-content: space-between; padding: 6px 6px 0; }
.cap { height: 18px; margin: 0 1px 0 2px; display: flex; align-items: center; justify-content: center; gap: 6px; background: #ededed; border-top: 1px solid #d4d4d4; color: #3a3d44; position: relative; white-space: nowrap; }
.launch { position: absolute; right: 4px; top: 6px; }
.p-draw { flex-basis: 263px; }
.p-edit { flex-basis: 256px; }
.p-annot { flex-basis: 94px; }
.p-layers { flex-basis: 214px; }
.p-block { flex-basis: 96px; }
.p-props { flex-basis: 162px; }
.p-util { flex-basis: 106px; }
.p-clip { flex-basis: 100px; }
.p-group { flex-basis: 74px; }
.p-draw .body { justify-content: flex-start; gap: 5px; }
.p-draw .stack { margin-left: auto; }
.p-draw .mid { padding-left: 4px; padding-right: 4px; }
.p-annot .body { padding: 6px 2px 0 11px; }
.p-layers .body, .p-block .body, .p-group .body { padding-left: 3px; padding-right: 2px; }
.p-util .body, .p-clip .body { padding: 6px 2px 0 11px; }
.tall { display: flex; flex-direction: column; align-items: center; align-self: flex-start; gap: 4px; padding-top: 1px; white-space: nowrap; }
.tall .tri { margin-top: -1px; }
.stack { display: flex; flex-direction: column; gap: 2px; }
.stack.left { align-items: flex-start; }
.stack.wide { flex: 1; min-width: 0; }
.sq, .split, .grp { height: 22px; border: 1px solid #c9cbce; background: linear-gradient(#fcfcfc, #ebebeb); }
.sq { width: 24px; display: grid; place-items: center; }
.sq.on { background: #a8d3f5; border-color: #3a7fc8; }
.split { width: 36px; display: flex; }
.split button { flex: 1; display: grid; place-items: center; }
.split .arr { flex: none; width: 12px; border-left: 1px solid #c9cbce; }
.row { height: 22px; display: flex; align-items: center; gap: 5px; white-space: nowrap; }
.row.mirror { padding-left: 3px; }
.layer-tools { display: flex; justify-content: space-between; }
.grp { display: flex; }
.grp button { width: 22px; display: grid; place-items: center; }
.grp button + button { width: 24px; border-left: 1px solid #c9cbce; }
.combo { height: 22px; min-width: 0; flex: 1; display: flex; align-items: center; gap: 2px; padding: 0 3px 0 2px; border: 1px solid #c9cbce; background: linear-gradient(#fdfdfd, #ececec); }
.stack .combo { flex: none; }
.swatch { flex: none; width: 14px; height: 14px; background: #000; }
.combo.layer { gap: 3px; }
.prop .swatch { width: 16px; height: 16px; }
.prop .swatch.weight { width: 64px; height: 10px; margin-left: 1px; }
.prop .swatch.thin { width: 59px; height: 1px; margin-left: 6px; }
.p-props .body { flex-direction: column; justify-content: flex-start; gap: 2px; padding: 6px 2px 0 4px; }
.prop { display: flex; align-items: center; gap: 2px; height: 22px; }

/* drawing area */
.canvas { flex: 1; min-height: 0; position: relative; border: solid #8b8b8b; border-width: 0 1px 1px 2px; overflow: hidden; background: #fff; }
.drawing { position: absolute; inset: 0; width: 100%; height: 100%; }
.view-label { position: absolute; left: 4px; top: 5px; display: flex; font-size: 11px; font-weight: 600; color: #222; }
.doc-controls { position: absolute; right: 8px; top: 7px; display: flex; gap: 7px; }
.viewcube { position: absolute; right: 8px; top: 31px; }
.navbar { position: absolute; right: 1px; top: 193px; border: 2px solid #c6c6c6; border-radius: 6px; background: rgba(246,246,246,.75); }
.tooltip { position: absolute; right: 41px; top: 293px; height: 24px; display: flex; align-items: center; gap: 4px; padding: 0 2px 2px 4px; background: #c6c6dc; border: 1px solid #000; color: #16165c; white-space: nowrap; }
.tooltip svg { align-self: flex-end; }
.console { position: absolute; left: 355px; bottom: 0; width: 651px; font: 13px/17px "Liberation Mono", monospace; }
.history { padding-left: 57px; display: flex; flex-direction: column; align-items: flex-start; }
.history p { margin: 0 0 1px; padding: 0 2px; height: 16px; line-height: 16px; color: #fff; background: rgba(82,82,82,.62); border-radius: 2px; white-space: pre; }
.history p + p { background: rgba(82,82,82,.75); }
.history p + p + p { background: rgba(72,72,72,.85); }
.cmd { height: 27px; display: flex; border: 1px solid #777; border-radius: 3px; background: #fff; color: #000; overflow: hidden; }
.cmd-grip { width: 53px; display: flex; align-items: center; justify-content: space-between; padding: 0 5px 0 4px; background: linear-gradient(#828282, #4e4e4e); }
.cmd-line { flex: 1; display: flex; align-items: center; padding: 0 4px; white-space: nowrap; }
.cmd-line b { margin: 0 8px 0 6px; }
.cmd-line button { height: 18px; padding: 0 1px; margin-right: 5px; background: #d2d2d2; border-radius: 3px; }
.cmd-line .last { margin-right: 1px; }
.cmd-line em { font-style: normal; color: #00f; }
.cmd-line .up { margin: 0 0 0 auto; background: none; }

/* sheet tabs */
.sheets { flex: none; height: 18px; display: flex; padding-left: 2px; background: #efefef; font: 12px/16px "Liberation Sans", Arial, sans-serif; color: #000; }
.nav { width: 15px; height: 16px; display: grid; place-items: center; border: 1px solid #c4c4c4; border-left: 0; }
.sheet { height: 16px; padding: 0 3px; }
.sheet.current { background: #fff; }

/* status bar */
.status { flex: none; height: 21px; display: flex; border-top: 1px solid #000; background: linear-gradient(#989898, #6c6c6c); font: 12px/16px "Liberation Sans", Arial, sans-serif; color: #000; }
.coords { width: 197px; padding-left: 12px; align-self: center; font-size: 11px; }
.toggles, .status-right { display: flex; }
.status-right { margin-left: auto; }
.status button { width: 22px; display: flex; align-items: center; justify-content: center; border-right: 1px solid #555; border-left: 1px solid #ddd; background: linear-gradient(#d2d2d2, #a3a3a3); overflow: hidden; }
.status button.on { background: linear-gradient(#e4f6fa, #9fd0e0); }
.status .model { width: 62px; }
.status .scale { width: 51px; gap: 3px; }
.status .menu { width: 13px; }
.status .menu .tri { border-width: 4px 3px 0; }
.gap { width: 12px; }
.gap.narrow { width: 6px; }
.tray { width: 45px; margin: 1px 5px 1px 0; display: flex; align-items: center; justify-content: space-around; border: 1px solid #444; background: #a0a0a0; }
```
